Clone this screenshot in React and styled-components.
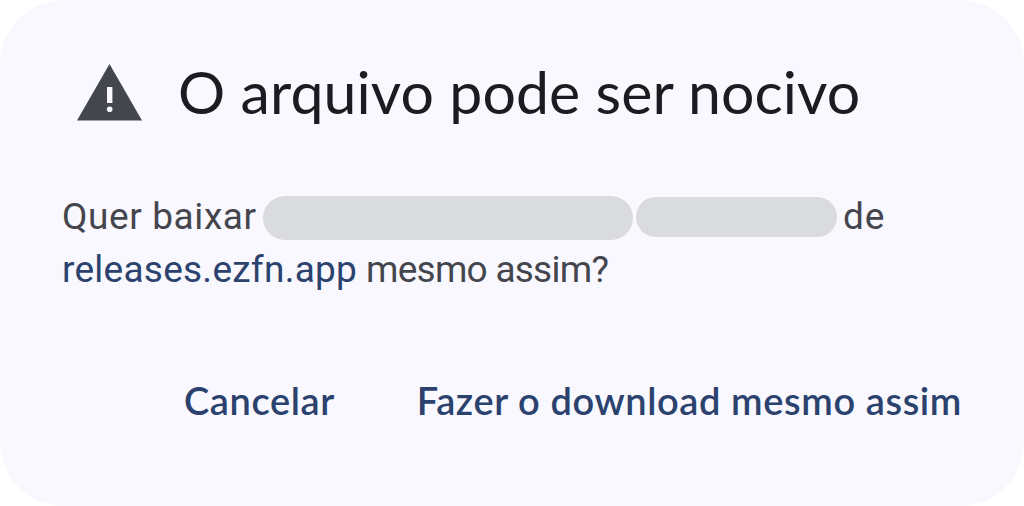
import React from "react";
import styled, { createGlobalStyle } from "styled-components";

const GlobalStyle = createGlobalStyle`
  body {
    margin: 0;
    background: #ffffff;
    font-family: Lato, "Open Sans", sans-serif;
  }
`;

const Dialog = styled.div`
  box-sizing: border-box;
  width: 1024px;
  height: 506px;
  padding: 60px 62px 0;
  background: #f8f8fe;
  border-radius: 64px;
  overflow: hidden;
`;

const Header = styled.div`
  display: flex;
  align-items: flex-start;
  height: 72px;

  svg {
    flex: none;
    margin: 4px 36px 0 15px;
  }
`;

const Title = styled.h1`
  margin: 0;
  color: #1b1b21;
  font-size: 59px;
  font-weight: 400;
  line-height: 64px;
  letter-spacing: 0.1px;
  white-space: nowrap;
`;

const Message = styled.div`
  margin-top: 58px;
  color: #45464d;
  font-family: Roboto, sans-serif;
  font-size: 37px;
  line-height: 53px;
  white-space: nowrap;
`;

const Line = styled.div`
  display: flex;
  align-items: flex-start;
  height: 53px;
`;

const Words = styled.span`
  width: ${(props) => props.$width}px;
  letter-spacing: ${(props) => props.$spacing || 0}px;
  white-space: pre;
`;

const Redacted = styled.span`
  width: ${(props) => props.$width}px;
  height: ${(props) => props.$height}px;
  margin: ${(props) => props.$top}px ${(props) => props.$gap}px 0 0;
  background: #dadbdf;
  border-radius: 22px;
`;

const Link = styled.a`
  width: 304px;
  color: #2b426e;
  letter-spacing: ${(props) => props.$spacing || 0}px;
`;

const Actions = styled.div`
  display: flex;
  margin: 74px 0 0 122px;
`;

const Action = styled.button`
  width: ${(props) => props.$width}px;
  padding: 0;
  border: 0;
  background: none;
  color: #2b426e;
  font-family: inherit;
  font-size: 38px;
  font-weight: 600;
  line-height: 60px;
  letter-spacing: 0.6px;
  text-align: left;
  white-space: nowrap;
`;

const WarningIcon = () => (
  <svg width="65" height="57" viewBox="0 0 65 57">
    <path d="M32.5 0L65 56.5H0z" fill="#43464d" />
    <path d="M30 23h5.4v16H30z" fill="#f8f8fe" />
    <circle cx="32.7" cy="45.2" r="2.8" fill="#f8f8fe" />
  </svg>
);

const App = () => {
  return (
    <>
      <GlobalStyle />
      <Dialog>
        <Header>
          <WarningIcon />
          <Title>O arquivo pode ser nocivo</Title>
        </Header>
        <Message>
          <Line>
            <Words $width={201} $spacing={0.6}>Quer baixar</Words>
            <Redacted $width={370} $height={44} $top={6} $gap={3} />
            <Redacted $width={201} $height={40} $top={7} $gap={6} />
            <Words $spacing={0.8}>de</Words>
          </Line>
          <Line>
            <Link $spacing={0.25}>releases.ezfn.app</Link>
            <Words $spacing={-0.75}>mesmo assim?</Words>
          </Line>
        </Message>
        <Actions>
          <Action $width={233}>Cancelar</Action>
          <Action>Fazer o download mesmo assim</Action>
        </Actions>
      </Dialog>
    </>
  );
};

export default App;
